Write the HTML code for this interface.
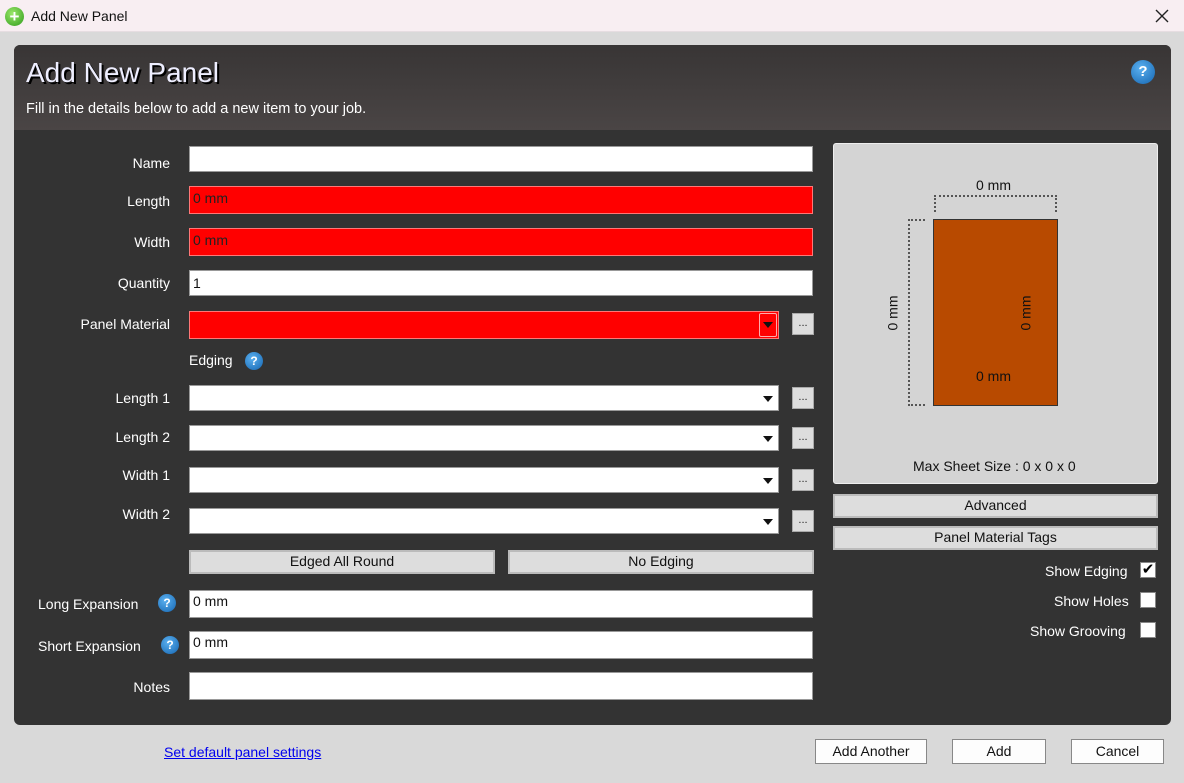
<!DOCTYPE html>
<html><head><style>
*{box-sizing:border-box;margin:0;padding:0}
body{width:1184px;height:783px;background:#d9d9d9;font-family:"Liberation Sans",sans-serif;position:relative;overflow:hidden;font-size:14px}
.a{position:absolute}
.tb{left:0;top:0;width:1184px;height:32px;background:#f8eef2;border-bottom:1px solid #e6dde1}
.panel{left:14px;top:45px;width:1157px;height:680px;background:#333;border-radius:6px;overflow:hidden}
.hdr{left:0;top:0;width:1157px;height:85px;background:linear-gradient(#383535,#4a4545)}
.lbl{color:#fff;font-size:14px;text-align:right;width:160px}
.in{background:#fff;border:1px solid #999;height:26px;font-size:14px;color:#111;padding:4px 3px}
.red{background:#f00;border:1px solid #f77;color:#222;padding:3px 3px}
.dots{width:22px;height:22px;background:#ddd;border:1px solid #aaa;font-size:11px;text-align:center;line-height:18px;color:#222}
.btn{background:#ddd;border:2px solid #bbb;text-align:center;font-size:14px;color:#111;line-height:19px}
.arr{position:absolute;right:5px;top:10px;width:0;height:0;border-left:5px solid transparent;border-right:5px solid transparent;border-top:6px solid #111}
.q{width:18px;height:18px;border-radius:50%;background:radial-gradient(circle at 40% 35%,#5ab0f0,#1565b0);color:#fff;font-weight:bold;font-size:12px;text-align:center;line-height:18px}
.cb{width:16px;height:16px;background:#fff;border:1px solid #888}
.wbtn{background:#fdfdfd;border:1px solid #888;text-align:center;font-size:14px;line-height:22px;color:#111;height:25px}
</style></head><body>
<div class="a tb"></div>
<div class="a" style="left:5px;top:7px;width:19px;height:19px;border-radius:50%;background:radial-gradient(circle at 40% 35%,#9be86a,#2e9a1a);color:#fff;font-weight:bold;text-align:center;line-height:19px;font-size:17px">+</div>
<div class="a" style="left:31px;top:8px;font-size:14px;color:#111">Add New Panel</div>
<svg class="a" style="left:1155px;top:9px" width="14" height="14"><path d="M1 1L13 13M13 1L1 13" stroke="#222" stroke-width="1.4"/></svg>

<div class="a panel">
<div class="a hdr"></div>
<div class="a" style="left:12px;top:12px;font-size:28px;color:#eef;text-shadow:2px 2px 0 #000">Add New Panel</div>
<div class="a" style="left:12px;top:56px;font-size:14.5px;color:#fff">Fill in the details below to add a new item to your job.</div>
<div class="a q" style="left:1117px;top:15px;width:24px;height:24px;line-height:24px;font-size:15px">?</div>
</div>

<div class="a lbl" style="left:10px;top:155px">Name</div><div class="a in" style="left:189px;top:146px;width:624px"></div>
<div class="a lbl" style="left:10px;top:193px">Length</div><div class="a in red" style="left:189px;top:186px;width:624px;height:28px">0 mm</div>
<div class="a lbl" style="left:10px;top:234px">Width</div><div class="a in red" style="left:189px;top:228px;width:624px;height:28px">0 mm</div>
<div class="a lbl" style="left:10px;top:275px">Quantity</div><div class="a in" style="left:189px;top:270px;width:624px">1</div>
<div class="a lbl" style="left:10px;top:316px">Panel Material</div><div class="a in red" style="left:189px;top:311px;width:590px;height:28px"><div class="a" style="right:1px;top:1px;width:18px;height:24px;border:1px solid #faa;border-radius:2px"></div><span class="arr" style="right:5px"></span></div>
<div class="a dots" style="left:792px;top:313px">...</div>
<div class="a" style="left:189px;top:352px;color:#fff">Edging</div><div class="a q" style="left:245px;top:352px">?</div>

<div class="a lbl" style="left:10px;top:390px">Length 1</div><div class="a in" style="left:189px;top:385px;width:590px"><span class="arr"></span></div><div class="a dots" style="left:792px;top:387px">...</div>
<div class="a lbl" style="left:10px;top:429px">Length 2</div><div class="a in" style="left:189px;top:425px;width:590px"><span class="arr"></span></div><div class="a dots" style="left:792px;top:427px">...</div>
<div class="a lbl" style="left:10px;top:467px">Width 1</div><div class="a in" style="left:189px;top:467px;width:590px"><span class="arr"></span></div><div class="a dots" style="left:792px;top:469px">...</div>
<div class="a lbl" style="left:10px;top:506px">Width 2</div><div class="a in" style="left:189px;top:508px;width:590px"><span class="arr"></span></div><div class="a dots" style="left:792px;top:510px">...</div>

<div class="a btn" style="left:189px;top:550px;width:306px;height:24px">Edged All Round</div>
<div class="a btn" style="left:508px;top:550px;width:306px;height:24px">No Edging</div>

<div class="a" style="left:38px;top:596px;color:#fff">Long Expansion</div><div class="a q" style="left:158px;top:594px">?</div>
<div class="a in" style="left:189px;top:590px;width:624px;height:28px;padding:2px 3px">0 mm</div>
<div class="a" style="left:38px;top:638px;color:#fff">Short Expansion</div><div class="a q" style="left:161px;top:636px">?</div>
<div class="a in" style="left:189px;top:631px;width:624px;height:28px;padding:2px 3px">0 mm</div>
<div class="a lbl" style="left:10px;top:679px">Notes</div><div class="a in" style="left:189px;top:672px;width:624px;height:28px"></div>

<div class="a" style="left:833px;top:143px;width:325px;height:341px;background:#d4d4d4;border:1px solid #eee;border-radius:3px"></div>
<div class="a" style="left:976px;top:177px;color:#111">0 mm</div>
<div class="a" style="left:934px;top:195px;width:123px;height:17px;border:2px dotted #555;border-bottom:none"></div>
<div class="a" style="left:908px;top:219px;width:17px;height:187px;border:2px dotted #555;border-right:none"></div>
<div class="a" style="left:933px;top:219px;width:125px;height:187px;background:#b84a00;border:1px solid #333"></div>
<div class="a" style="left:875px;top:305px;transform:rotate(-90deg);color:#111">0 mm</div>
<div class="a" style="left:1008px;top:305px;transform:rotate(-90deg);color:#111">0 mm</div>
<div class="a" style="left:976px;top:368px;color:#111">0 mm</div>
<div class="a" style="left:913px;top:458px;color:#111">Max Sheet Size : 0 x 0 x 0</div>
<div class="a btn" style="left:833px;top:494px;width:325px;height:24px">Advanced</div>
<div class="a btn" style="left:833px;top:526px;width:325px;height:24px">Panel Material Tags</div>
<div class="a" style="left:1045px;top:563px;color:#fff">Show Edging</div><div class="a cb" style="left:1140px;top:562px;font-size:15px;line-height:13px;text-align:center;color:#000">✔</div>
<div class="a" style="left:1054px;top:593px;color:#fff">Show Holes</div><div class="a cb" style="left:1140px;top:592px"></div>
<div class="a" style="left:1030px;top:623px;color:#fff">Show Grooving</div><div class="a cb" style="left:1140px;top:622px"></div>

<div class="a" style="left:164px;top:744px;color:#00e;text-decoration:underline">Set default panel settings</div>
<div class="a wbtn" style="left:815px;top:739px;width:112px">Add Another</div>
<div class="a wbtn" style="left:952px;top:739px;width:94px">Add</div>
<div class="a wbtn" style="left:1071px;top:739px;width:93px">Cancel</div>
</body></html>
